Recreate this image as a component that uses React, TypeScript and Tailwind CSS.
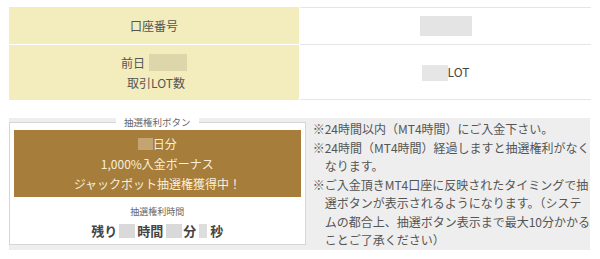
import React from "react";

const JP = { fontFamily: '"Noto Sans CJK JP", "Noto Sans", sans-serif' };

function Blur({ className }: { className: string }) {
  return <span className={"inline-block align-middle blur-[0.6px] " + className} />;
}

export default function App() {
  return (
    <div className="w-[600px] h-[259px] bg-white pt-[7px] pl-[9px] overflow-hidden text-[#555]" style={JP}>
      {/* table */}
      <div className="w-[582px] flex flex-col">
        <div className="flex h-[38px]">
          <div className="w-[290px] bg-[#f3ecbd] border-b border-white flex items-center justify-center text-[12px] text-[#555]">
            口座番号
          </div>
          <div className="w-[1px] bg-white" />
          <div className="flex-1 border-y border-[#e6e6e6] flex items-center justify-center">
            <Blur className="w-[52px] h-[20px] bg-[#e4e4e4]" />
          </div>
        </div>
        <div className="flex h-[55px]">
          <div className="w-[290px] bg-[#f3ecbd] flex flex-col items-center justify-center text-[12px] leading-[20px] text-[#555]">
            <div className="flex items-center">
              <span>前日</span>
              <Blur className="ml-[4px] w-[38px] h-[17px] bg-[#ddd6aa]" />
            </div>
            <div className="ml-[4px]">取引LOT数</div>
          </div>
          <div className="w-[1px] bg-white" />
          <div className="flex-1 border-b border-[#e6e6e6] flex items-center justify-center text-[12px] text-[#444]">
            <Blur className="w-[26px] h-[16px] bg-[#e6e6e6] mt-[1px]" />
            <span>LOT</span>
          </div>
        </div>
      </div>

      {/* lower panel */}
      <div className="mt-[18px] w-[581px] h-[132px] bg-[#eeeeee] flex">
        <fieldset className="w-[298px] h-[127px] bg-white border border-[#d6d6d6] px-[4px] pt-[4px] flex flex-col">
          <legend className="mx-auto px-[8px] text-[9.5px] leading-[8px] text-[#666] bg-white">
            抽選権利ボタン
          </legend>
          <div className="bg-[#a67d3b] text-[#f8efdc] text-[12px] leading-[20px] text-center pt-[4px] pb-[3px]">
            <div className="flex items-center justify-center">
              <Blur className="w-[15px] h-[12px] bg-[#c4a571]" />
              <span>日分</span>
            </div>
            <div>1,000%入金ボーナス</div>
            <div>ジャックポット抽選権獲得中！</div>
          </div>
          <div className="text-center text-[9px] leading-[12px] text-[#666] mt-[9px]">抽選権利時間</div>
          <div className="flex items-center justify-center text-[13px] leading-[20px] font-bold text-[#444] mt-[3px]">
            <span>残り</span>
            <Blur className="mx-[2px] w-[16px] h-[14px] bg-[#d9d9d9]" />
            <span>時間</span>
            <Blur className="ml-[3px] mr-[1px] w-[16px] h-[14px] bg-[#d9d9d9]" />
            <span>分</span>
            <Blur className="mx-[3px] w-[8px] h-[14px] bg-[#dddddd]" />
            <span>秒</span>
          </div>
        </fieldset>
        <div className="pl-[7px] pt-[2px] text-[12px] leading-[18.5px] text-[#555] whitespace-nowrap">
          <div>※24時間以内（MT4時間）にご入金下さい。</div>
          <div>※24時間（MT4時間）経過しますと抽選権利がなく</div>
          <div className="pl-[12px]">なります。</div>
          <div>※ご入金頂きMT4口座に反映されたタイミングで抽</div>
          <div className="pl-[12px]">選ボタンが表示されるようになります。（システ</div>
          <div className="pl-[12px]">ムの都合上、抽選ボタン表示まで最大10分かかる</div>
          <div className="pl-[12px]">ことご了承ください）</div>
        </div>
      </div>
    </div>
  );
}
